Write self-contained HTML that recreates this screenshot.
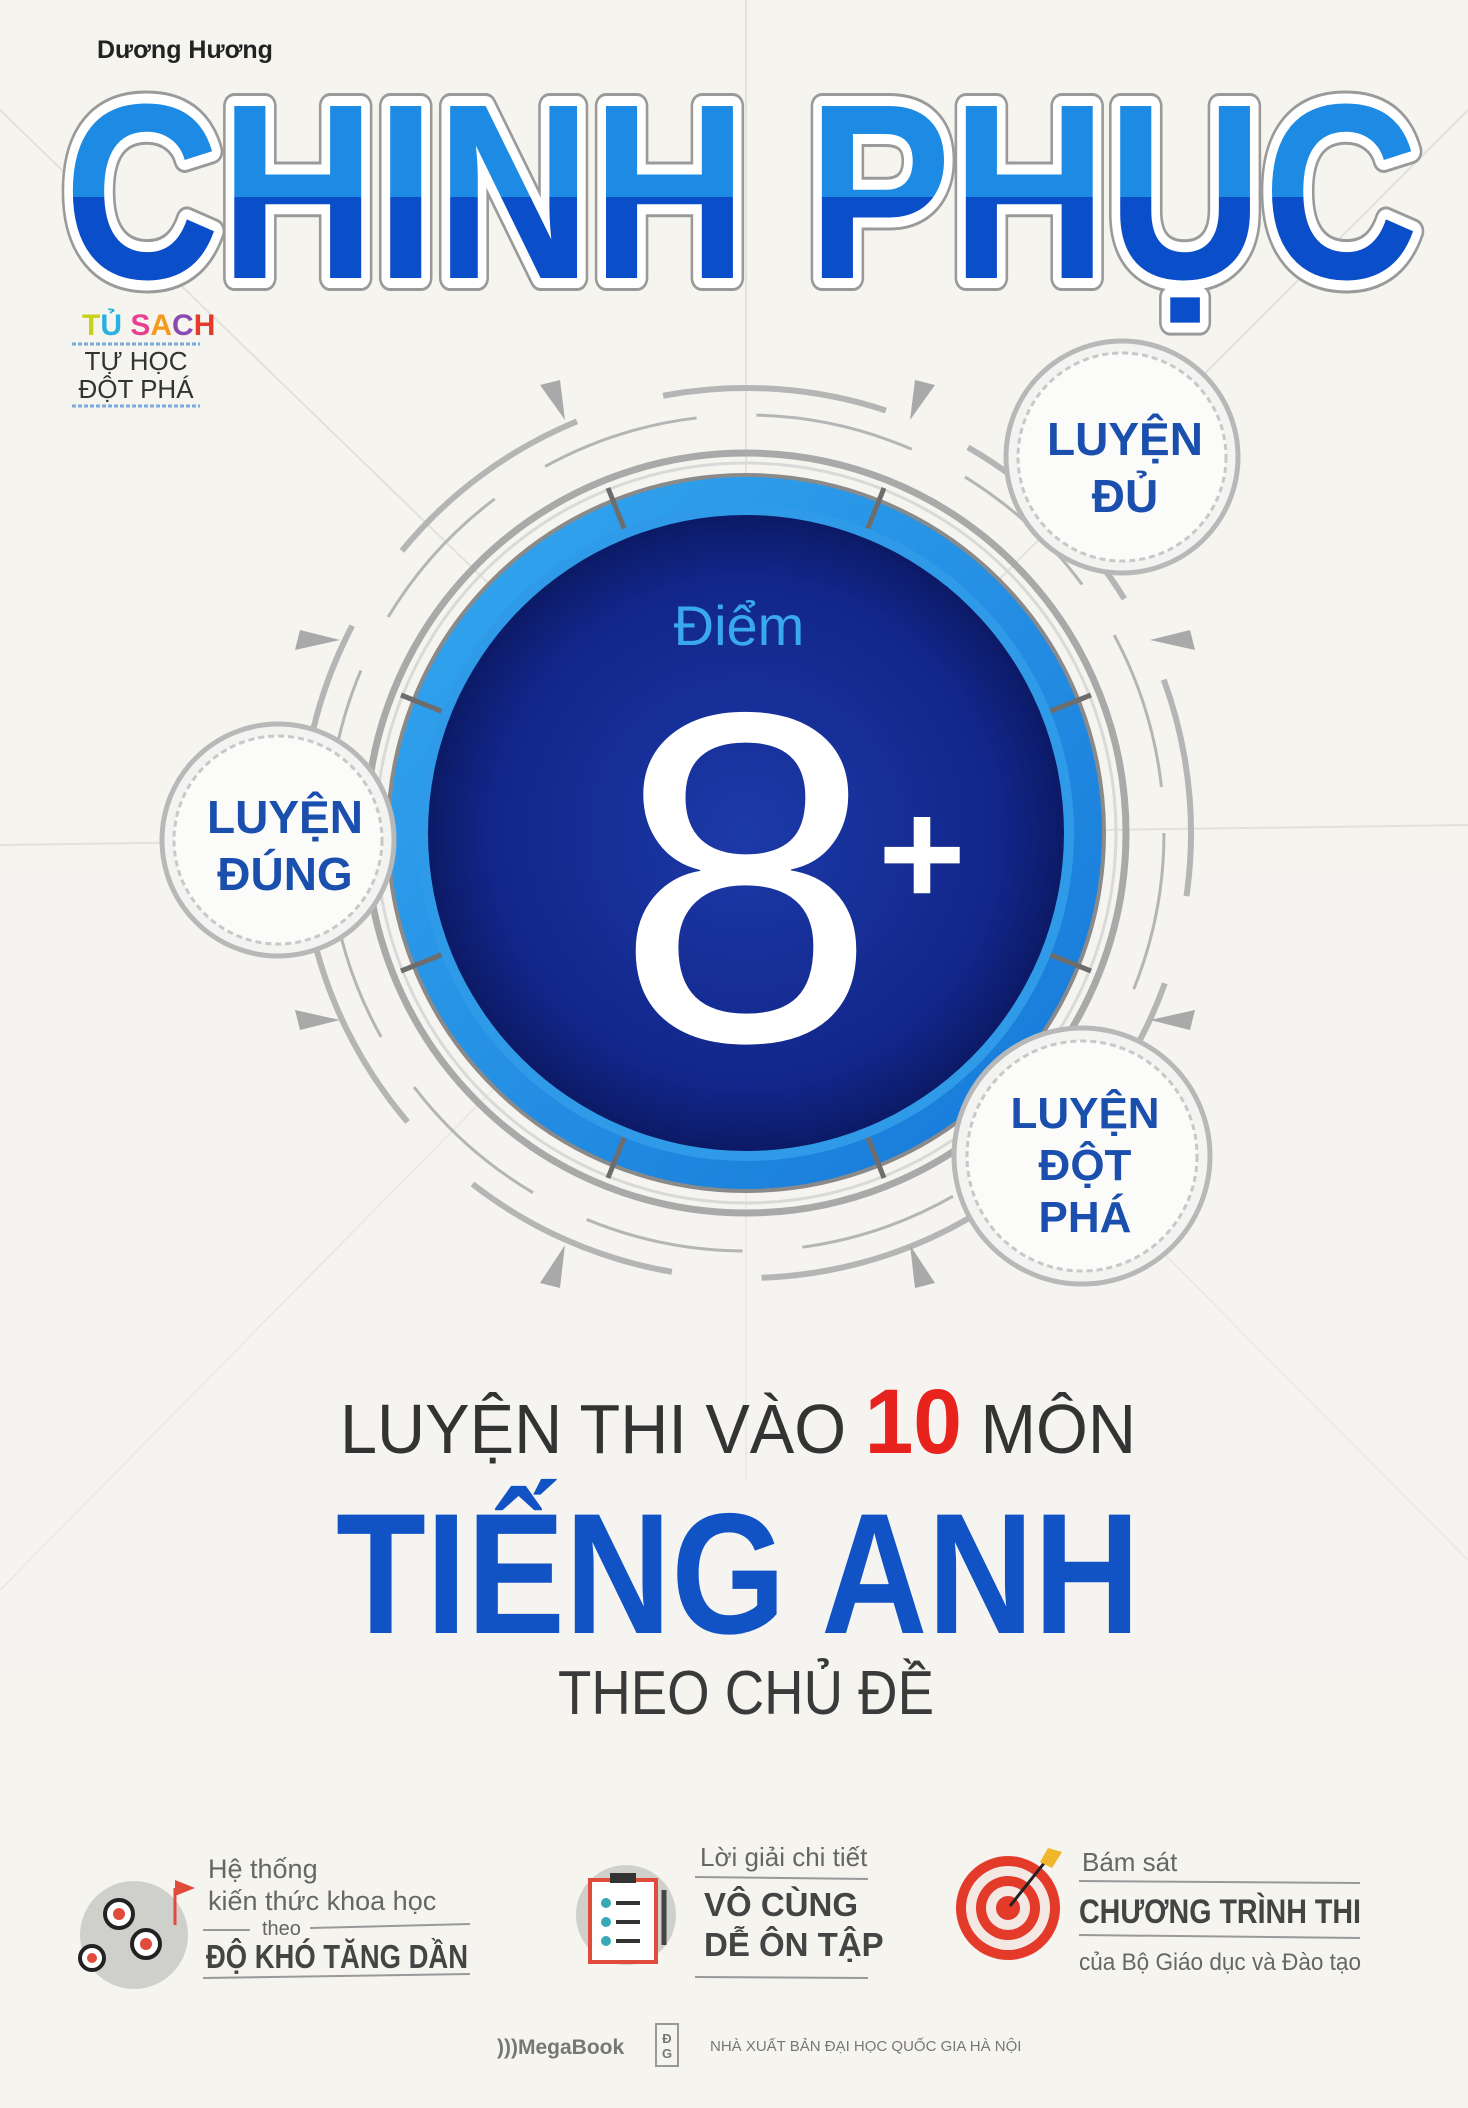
<!DOCTYPE html>
<html><head><meta charset="utf-8"><style>
html,body{margin:0;padding:0;background:#f5f4ef}
svg{display:block}
text{font-family:"Liberation Sans",sans-serif}
</style></head><body>
<svg width="1468" height="2108" viewBox="0 0 1468 2108" xmlns="http://www.w3.org/2000/svg">
<defs>
<linearGradient id="cp" x1="0" y1="0" x2="0" y2="1" gradientUnits="objectBoundingBox">
<stop offset="0" stop-color="#1d8ae4"/><stop offset="0.52" stop-color="#1d8ae4"/><stop offset="0.52" stop-color="#0b4ec9"/><stop offset="1" stop-color="#0b4ec9"/>
</linearGradient>
<radialGradient id="dk" cx="0.5" cy="0.5" r="0.5">
<stop offset="0" stop-color="#1c3aa8"/><stop offset="0.8" stop-color="#12268a"/><stop offset="1" stop-color="#0c1a66"/>
</radialGradient>
<linearGradient id="rg" x1="0" y1="0" x2="1" y2="1">
<stop offset="0" stop-color="#34a8f0"/><stop offset="1" stop-color="#1577d8"/>
</linearGradient>
</defs>
<rect width="1468" height="2108" fill="#f5f4ef"/>
<!-- faint background lines -->
<g stroke="#e2e1dc" stroke-width="2" fill="none">
<line x1="0" y1="110" x2="746" y2="833"/><line x1="1468" y1="110" x2="746" y2="833"/>
<line x1="0" y1="1590" x2="746" y2="833"/><line x1="1468" y1="1560" x2="746" y2="833"/>
<line x1="746" y1="0" x2="746" y2="1480"/><line x1="0" y1="845" x2="1468" y2="825"/>
</g>
<rect x="0" y="870" width="1468" height="800" fill="#f7f6f2" opacity="0.4"/>

<text x="97" y="58" font-size="25" font-weight="bold" fill="#222">Dương Hương</text>

<!-- CHINH PHUC -->
<g font-weight="900" font-size="250" font-family="Liberation Sans">
<text x="64" y="278" textLength="1355" lengthAdjust="spacingAndGlyphs" fill="none" stroke="#9a9a9a" stroke-width="26" stroke-linejoin="round">CHINH PHỤC</text>
<text x="64" y="278" textLength="1355" lengthAdjust="spacingAndGlyphs" fill="none" stroke="#ffffff" stroke-width="20" stroke-linejoin="round">CHINH PHỤC</text>
<text x="64" y="278" textLength="1355" lengthAdjust="spacingAndGlyphs" fill="url(#cp)">CHINH PHỤC</text>
</g>

<!-- Tu sach -->
<text x="82" y="335" font-size="30" font-weight="bold"><tspan fill="#c9d11b">T</tspan><tspan fill="#27b0e0">Ủ </tspan><tspan fill="#e84090">S</tspan><tspan fill="#f39a1c">A</tspan><tspan fill="#8a4ab0">C</tspan><tspan fill="#e43a2a">H</tspan></text>
<line x1="72" y1="344" x2="200" y2="344" stroke="#7aa9de" stroke-width="3" stroke-dasharray="4 2"/>
<text x="136" y="370" font-size="26" fill="#333" text-anchor="middle">TỰ HỌC</text>
<text x="136" y="398" font-size="26" fill="#333" text-anchor="middle">ĐỘT PHÁ</text>
<line x1="72" y1="406" x2="200" y2="406" stroke="#7aa9de" stroke-width="3" stroke-dasharray="4 2"/>

<!-- outer gray arcs -->
<g fill="none" stroke="#b5b5b5">
<circle cx="746" cy="833" r="445" stroke-width="6" stroke-dasharray="220 90" transform="rotate(-100 746 833)"/>
<circle cx="746" cy="833" r="418" stroke-width="3" stroke-dasharray="160 60"/>
<circle cx="746" cy="833" r="380" stroke-width="7" stroke="#a9a9a9"/>
<circle cx="746" cy="833" r="370" stroke-width="3" stroke="#d9d9d9"/>
</g>
<g fill="#a9a9a9">
<polygon points="540,385 560,380 565,420"/><polygon points="935,385 915,380 910,420"/>
<polygon points="540,1283 560,1288 565,1245"/><polygon points="935,1283 915,1288 910,1245"/>
<polygon points="295,650 300,630 340,640"/><polygon points="1195,650 1190,630 1150,640"/>
<polygon points="295,1010 300,1030 340,1020"/><polygon points="1195,1010 1190,1030 1150,1020"/>
</g>

<!-- blue ring -->
<circle cx="746" cy="833" r="358" fill="url(#rg)"/>
<circle cx="746" cy="833" r="358" fill="none" stroke="#8a8a8a" stroke-width="4"/>
<g stroke="#6d6d6d" stroke-width="5">
<line x1="746" y1="833" x2="608" y2="488" /><line x1="746" y1="833" x2="884" y2="488"/>
<line x1="746" y1="833" x2="1091" y2="695"/><line x1="746" y1="833" x2="1091" y2="971"/>
<line x1="746" y1="833" x2="884" y2="1178"/><line x1="746" y1="833" x2="608" y2="1178"/>
<line x1="746" y1="833" x2="401" y2="971"/><line x1="746" y1="833" x2="401" y2="695"/>
</g>
<circle cx="746" cy="833" r="328" fill="#2f9be8"/>
<circle cx="746" cy="833" r="318" fill="url(#dk)"/>
<text x="739" y="645" font-size="56" fill="#3aa8f0" text-anchor="middle">Điểm</text>
<text x="746" y="1040" font-size="470" fill="#ffffff" text-anchor="middle" font-weight="normal">8</text>
<text x="922" y="905" font-size="150" fill="#ffffff" text-anchor="middle" font-weight="bold">+</text>

<!-- small circles -->
<g>
<circle cx="1122" cy="457" r="116" fill="#f3f3f1" stroke="#b8b8b8" stroke-width="5"/>
<circle cx="1122" cy="457" r="104" fill="#fbfbf9" stroke="#c8c8c8" stroke-width="3" stroke-dasharray="6 4"/>
<text x="1125" y="455" font-size="46" font-weight="bold" fill="#1a4fae" text-anchor="middle">LUYỆN</text>
<text x="1125" y="512" font-size="46" font-weight="bold" fill="#1a4fae" text-anchor="middle">ĐỦ</text>

<circle cx="278" cy="840" r="116" fill="#f3f3f1" stroke="#b8b8b8" stroke-width="5"/>
<circle cx="278" cy="840" r="104" fill="#fbfbf9" stroke="#c8c8c8" stroke-width="3" stroke-dasharray="6 4"/>
<text x="285" y="833" font-size="46" font-weight="bold" fill="#1a4fae" text-anchor="middle">LUYỆN</text>
<text x="285" y="890" font-size="46" font-weight="bold" fill="#1a4fae" text-anchor="middle">ĐÚNG</text>

<circle cx="1082" cy="1156" r="128" fill="#f3f3f1" stroke="#b8b8b8" stroke-width="5"/>
<circle cx="1082" cy="1156" r="115" fill="#fbfbf9" stroke="#c8c8c8" stroke-width="3" stroke-dasharray="6 4"/>
<text x="1085" y="1128" font-size="44" font-weight="bold" fill="#1a4fae" text-anchor="middle">LUYỆN</text>
<text x="1085" y="1180" font-size="44" font-weight="bold" fill="#1a4fae" text-anchor="middle">ĐỘT</text>
<text x="1085" y="1232" font-size="44" font-weight="bold" fill="#1a4fae" text-anchor="middle">PHÁ</text>
</g>

<!-- titles -->
<text x="340" y="1453" font-size="70" fill="#333" textLength="796" lengthAdjust="spacingAndGlyphs">LUYỆN THI VÀO <tspan fill="#e8221d" font-weight="bold" font-size="92">10</tspan> MÔN</text>
<text x="336" y="1633" font-size="172" font-weight="bold" fill="#1153c4" textLength="804" lengthAdjust="spacingAndGlyphs">TIẾNG ANH</text>
<text x="558" y="1714" font-size="62" fill="#3a3a3a" textLength="376" lengthAdjust="spacingAndGlyphs">THEO CHỦ ĐỀ</text>

<!-- feature 1 -->
<circle cx="134" cy="1935" r="54" fill="#cfcfcc"/>
<g stroke="#222" stroke-width="4" fill="#fff"><circle cx="92" cy="1958" r="12"/><circle cx="119" cy="1914" r="14"/><circle cx="146" cy="1944" r="14"/></g>
<g fill="#e14b3b"><circle cx="92" cy="1958" r="5"/><circle cx="119" cy="1914" r="6"/><circle cx="146" cy="1944" r="6"/></g>
<line x1="175" y1="1888" x2="175" y2="1925" stroke="#e14b3b" stroke-width="3"/><polygon points="175,1880 195,1888 175,1896" fill="#e14b3b"/>
<text x="208" y="1878" font-size="27" fill="#666">Hệ thống</text>
<text x="208" y="1910" font-size="27" fill="#666">kiến thức khoa học</text>
<text x="262" y="1935" font-size="20" fill="#666">theo</text>
<line x1="203" y1="1930" x2="250" y2="1930" stroke="#999" stroke-width="2"/><line x1="310" y1="1928" x2="470" y2="1924" stroke="#999" stroke-width="2"/>
<text x="206" y="1968" font-size="33" font-weight="bold" fill="#444" textLength="262" lengthAdjust="spacingAndGlyphs">ĐỘ KHÓ TĂNG DẦN</text>
<line x1="203" y1="1978" x2="470" y2="1974" stroke="#999" stroke-width="2"/>

<!-- feature 2 -->
<circle cx="626" cy="1915" r="50" fill="#cfcfcc"/>
<rect x="590" y="1880" width="66" height="82" fill="#fff" stroke="#e14b3b" stroke-width="4"/>
<rect x="610" y="1873" width="26" height="10" fill="#333"/>
<g fill="#36a9b4"><circle cx="606" cy="1903" r="5"/><circle cx="606" cy="1922" r="5"/><circle cx="606" cy="1941" r="5"/></g>
<g stroke="#333" stroke-width="4"><line x1="616" y1="1903" x2="640" y2="1903"/><line x1="616" y1="1922" x2="640" y2="1922"/><line x1="616" y1="1941" x2="640" y2="1941"/></g>
<line x1="664" y1="1890" x2="664" y2="1945" stroke="#444" stroke-width="5"/>
<text x="700" y="1866" font-size="26" fill="#666">Lời giải chi tiết</text>
<line x1="695" y1="1877" x2="868" y2="1879" stroke="#999" stroke-width="2"/>
<text x="704" y="1916" font-size="33" font-weight="bold" fill="#444">VÔ CÙNG</text>
<text x="704" y="1956" font-size="33" font-weight="bold" fill="#444">DỄ ÔN TẬP</text>
<line x1="695" y1="1977" x2="868" y2="1978" stroke="#999" stroke-width="2"/>

<!-- feature 3 -->
<circle cx="1008" cy="1908" r="52" fill="#e43a2a"/>
<circle cx="1008" cy="1908" r="42" fill="#f4e8e4"/>
<circle cx="1008" cy="1908" r="32" fill="#e43a2a"/>
<circle cx="1008" cy="1908" r="22" fill="#f4e8e4"/>
<circle cx="1008" cy="1908" r="12" fill="#e43a2a"/>
<line x1="1010" y1="1906" x2="1045" y2="1862" stroke="#222" stroke-width="3"/>
<polygon points="1048,1848 1062,1852 1052,1868 1040,1862" fill="#f1b72a"/>
<text x="1082" y="1871" font-size="26" fill="#666">Bám sát</text>
<line x1="1079" y1="1881" x2="1360" y2="1883" stroke="#999" stroke-width="2"/>
<text x="1079" y="1923" font-size="34" font-weight="bold" fill="#444" textLength="282" lengthAdjust="spacingAndGlyphs">CHƯƠNG TRÌNH THI</text>
<line x1="1079" y1="1935" x2="1360" y2="1938" stroke="#999" stroke-width="2"/>
<text x="1079" y="1970" font-size="24" fill="#666" textLength="282" lengthAdjust="spacingAndGlyphs">của Bộ Giáo dục và Đào tạo</text>

<!-- footer -->
<text x="497" y="2054" font-size="21" font-weight="bold" fill="#777">)))MegaBook</text>
<rect x="656" y="2024" width="22" height="42" fill="none" stroke="#999" stroke-width="2"/>
<text x="667" y="2043" font-size="13" font-weight="bold" fill="#777" text-anchor="middle">Đ</text>
<text x="667" y="2058" font-size="13" font-weight="bold" fill="#777" text-anchor="middle">G</text>
<text x="710" y="2051" font-size="15" fill="#777">NHÀ XUẤT BẢN ĐẠI HỌC QUỐC GIA HÀ NỘI</text>
</svg>
</body></html>
